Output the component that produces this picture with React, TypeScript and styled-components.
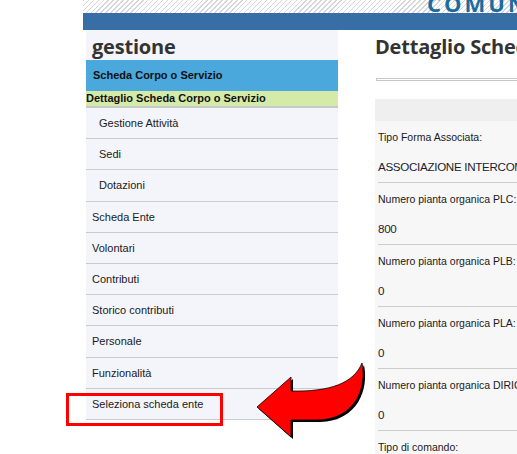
import React from 'react';
import styled, { createGlobalStyle } from 'styled-components';

const GlobalStyle = createGlobalStyle`
  html, body {
    margin: 0;
    padding: 0;
    background: #ffffff;
    overflow: hidden;
  }
  body {
    font-family: "Liberation Sans", Arial, sans-serif;
    color: #222;
  }
`;

const Page = styled.div`
  position: relative;
  width: 517px;
  height: 454px;
  overflow: hidden;
  padding-left: 83px;
  box-sizing: border-box;
`;

const TopStrip = styled.div`
  height: 13px;
  width: 700px;
  overflow: hidden;
  display: flex;
  align-items: flex-end;
  padding-left: 344px;
  box-sizing: border-box;
  background: repeating-linear-gradient(-45deg, #ffffff 0 2.5px, #d6d6d6 2.5px 3.5px);
`;

const TownName = styled.div`
  font-family: "Open Sans", "DejaVu Sans", sans-serif;
  font-weight: 700;
  font-size: 22px;
  line-height: 22px;
  letter-spacing: 3px;
  color: #1b6b9c;
  margin-bottom: -1px;
  white-space: nowrap;
`;

const BlueBar = styled.div`
  height: 17px;
  width: 700px;
  background: #376ea6;
`;

const Main = styled.div`
  display: flex;
  align-items: flex-start;
  gap: 37px;
  padding-left: 3px;
`;

const Sidebar = styled.nav`
  width: 252px;
  flex: none;
  background: #f4f5fa;
`;

const SideTitle = styled.h2`
  margin: 0;
  height: 30px;
  padding-left: 6px;
  font-family: "Open Sans", "Liberation Sans", sans-serif;
  font-size: 20px;
  font-weight: 700;
  line-height: 34px;
  color: #333;
  letter-spacing: -0.2px;
`;

const ActiveItem = styled.div`
  height: 31px;
  line-height: 31px;
  padding-left: 7px;
  background: #4aa8dd;
  font-size: 11px;
  font-weight: 700;
  color: #111;
`;

const CurrentItem = styled.div`
  height: 15px;
  line-height: 15px;
  background: #d4eaa8;
  border-bottom: 2px solid #c8c8c8;
  font-size: 11px;
  font-weight: 700;
  color: #111;
`;

const MenuItem = styled.div<{ $sub?: boolean }>`
  height: 30.2px;
  line-height: 30px;
  padding-left: ${p => (p.$sub ? 13 : 6)}px;
  border-bottom: 1px solid #cbcbcb;
  font-size: 11px;
  color: #1a1a1a;
`;

const Content = styled.section`
  width: 400px;
  flex: none;
`;

const PageTitle = styled.h1`
  margin: 0;
  height: 30px;
  font-family: "Open Sans", "Liberation Sans", sans-serif;
  font-size: 20px;
  font-weight: 700;
  line-height: 34px;
  color: #333;
  white-space: nowrap;
  letter-spacing: -0.2px;
`;

const Rule = styled.div`
  margin: 18px 0 0 1px;
  height: 1px;
  border: 1px solid #c9c9c9;
  background: #ffffff;
`;

const Panel = styled.div`
  margin-top: 18px;
  background: #f7f7f7;
`;

const PanelHead = styled.div`
  height: 22px;
  background: #efefef;
`;

const Field = styled.div`
  margin: 0 3px;
  border-bottom: 1px solid #cccccc;
  white-space: nowrap;
`;

const FieldLabel = styled.div`
  height: 31px;
  line-height: 32px;
  font-size: 10.5px;
  color: #1a1a1a;
`;

const FieldValue = styled.div`
  height: 30px;
  line-height: 30px;
  font-size: 11.6px;
  letter-spacing: -0.3px;
  color: #1c1c30;
`;

const Highlight = styled.div`
  position: absolute;
  left: 66px;
  top: 393px;
  width: 157px;
  height: 33px;
  box-sizing: border-box;
  border: 3px solid #ff0000;
`;

const ArrowMark = styled.svg`
  position: absolute;
  left: 250px;
  top: 355px;
`;

const subItems = ['Gestione Attività', 'Sedi', 'Dotazioni'];
const mainItems = [
  'Scheda Ente',
  'Volontari',
  'Contributi',
  'Storico contributi',
  'Personale',
  'Funzionalità',
  'Seleziona scheda ente',
];

const fields = [
  { label: 'Tipo Forma Associata:', value: 'ASSOCIAZIONE INTERCOMUNALE' },
  { label: 'Numero pianta organica PLC:', value: '800' },
  { label: 'Numero pianta organica PLB:', value: '0' },
  { label: 'Numero pianta organica PLA:', value: '0' },
  { label: 'Numero pianta organica DIRIGENTI:', value: '0' },
  { label: 'Tipo di comando:', value: '' },
];

const arrowPath =
  'M7 52 L41 22 L41 36 C80 37 104 28 112 8 C117 32 106 64 68 65 L41 65 L41 82 Z';

const App: React.FC = () => {
  return (
    <Page>
      <GlobalStyle />
      <TopStrip>
        <TownName>COMUNE DI</TownName>
      </TopStrip>
      <BlueBar />
      <Main>
        <Sidebar>
          <SideTitle>gestione</SideTitle>
          <ActiveItem>Scheda Corpo o Servizio</ActiveItem>
          <CurrentItem>Dettaglio Scheda Corpo o Servizio</CurrentItem>
          {subItems.map(item => (
            <MenuItem key={item} $sub>
              {item}
            </MenuItem>
          ))}
          {mainItems.map(item => (
            <MenuItem key={item}>{item}</MenuItem>
          ))}
        </Sidebar>
        <Content>
          <PageTitle>Dettaglio Scheda Corpo o Servizio</PageTitle>
          <Rule />
          <Panel>
            <PanelHead />
            {fields.map(f => (
              <Field key={f.label}>
                <FieldLabel>{f.label}</FieldLabel>
                <FieldValue>{f.value}</FieldValue>
              </Field>
            ))}
          </Panel>
        </Content>
      </Main>
      <Highlight />
      <ArrowMark width="122" height="92" viewBox="0 0 122 92">
        <path d={arrowPath} fill="#000" transform="translate(2 2)" />
        <path d={arrowPath} fill="#ff0000" stroke="#000" strokeWidth="0.8" />
      </ArrowMark>
    </Page>
  );
};

export default App;
